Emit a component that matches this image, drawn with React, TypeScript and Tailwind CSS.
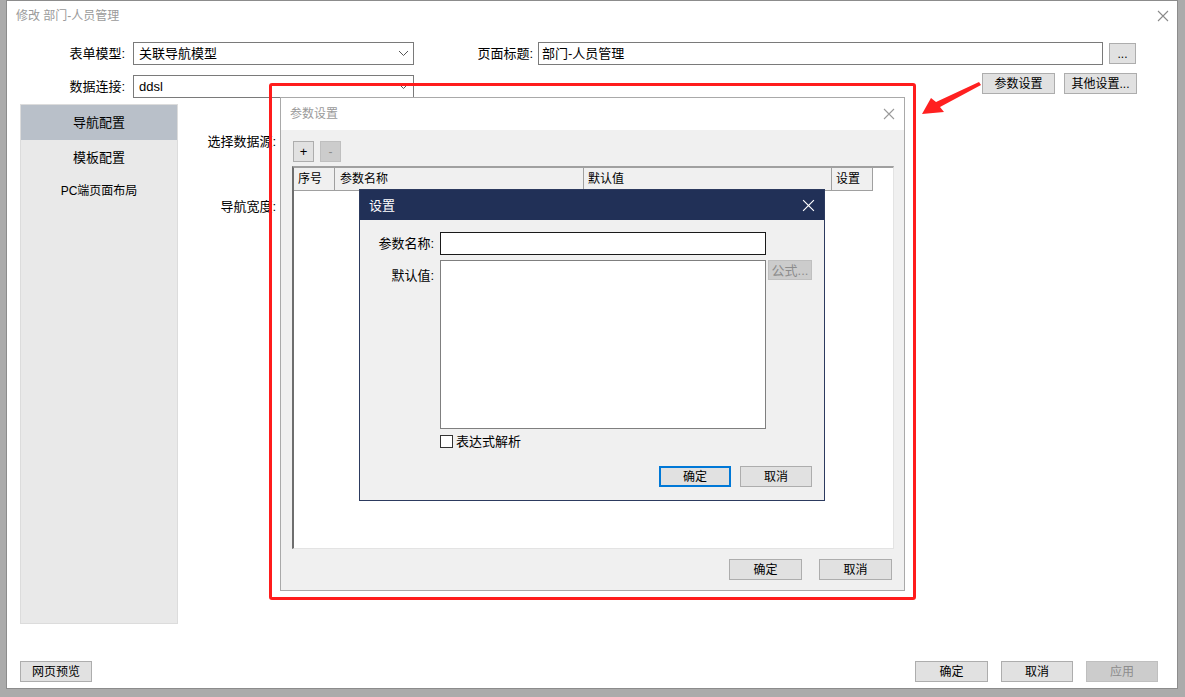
import React from "react";

function Btn({
  children,
  className = "",
  variant = "normal",
}: {
  children: React.ReactNode;
  className?: string;
  variant?: "normal" | "disabled" | "primary";
}) {
  const v =
    variant === "disabled"
      ? "bg-[#cccccc] border border-[#bfbfbf] text-[#8c8c8c]"
      : variant === "primary"
      ? "bg-[#e1e1e1] border-2 border-[#0078d7] text-black"
      : "bg-[#e1e1e1] border border-[#adadad] text-black";
  return (
    <div className={`flex items-center justify-center text-[12px] leading-none ${v} ${className}`}>
      {children}
    </div>
  );
}

function Chevron() {
  return (
    <svg width="11" height="7" viewBox="0 0 11 7" className="shrink-0">
      <path d="M1 1 L5.5 5.5 L10 1" fill="none" stroke="#555" strokeWidth="1" />
    </svg>
  );
}

function XIcon({ color, size = 12 }: { color: string; size?: number }) {
  return (
    <svg width={size} height={size} viewBox="0 0 12 12">
      <path d="M1 1 L11 11 M11 1 L1 11" stroke={color} strokeWidth="1.1" fill="none" />
    </svg>
  );
}

function Select({ value }: { value: string }) {
  return (
    <div className="flex items-center justify-between w-[281px] h-[23px] border border-[#7a7a7a] bg-white pl-[5px] pr-[4px]">
      <span className="text-[13px] text-black leading-none">{value}</span>
      <Chevron />
    </div>
  );
}

export default function App() {
  return (
    <div className="relative w-[1185px] h-[697px] bg-[#ababab] pl-[6px] pr-[7px] pb-[8px] overflow-hidden font-['Liberation_Sans','Noto_Sans_CJK_SC',sans-serif]">
      {/* Outer window */}
      <div className="w-full h-full bg-white border border-[#8c8c8c] flex flex-col">
        {/* title bar */}
        <div className="h-[30px] flex items-center justify-between pl-[9px] pr-[8px]">
          <span className="text-[12px] text-[#9a9a9a] leading-none">修改 部门-人员管理</span>
          <XIcon color="#8a8a8a" />
        </div>
        {/* row 1 */}
        <div className="mt-[11px] h-[23px] flex items-center">
          <div className="w-[120px] text-right text-[13px] text-black leading-none pr-[2px]">表单模型:</div>
          <div className="ml-[6px]">
            <Select value="关联导航模型" />
          </div>
          <div className="w-[124px] text-right text-[13px] text-black leading-none pr-[5px]">页面标题:</div>
          <div className="w-[565px] h-[23px] border border-[#7a7a7a] bg-white flex items-center pl-[3px]">
            <span className="text-[13px] text-black leading-none">部门-人员管理</span>
          </div>
          <Btn className="ml-[6px] w-[27px] h-[21px]">...</Btn>
        </div>
        {/* row 2 */}
        <div className="mt-[10px] h-[23px] flex items-center">
          <div className="w-[120px] text-right text-[13px] text-black leading-none pr-[2px]">数据连接:</div>
          <div className="ml-[6px]">
            <Select value="ddsl" />
          </div>
          <div className="flex-1" />
          <div className="flex self-start -mt-[2px] gap-[9px] mr-[40px]">
            <Btn className="w-[73px] h-[21px]">参数设置</Btn>
            <Btn className="w-[73px] h-[21px]">其他设置...</Btn>
          </div>
        </div>
        {/* main */}
        <div className="mt-[6px] h-[520px] flex pl-[13px]">
          <div className="w-[158px] h-full bg-[#e9e9e9] border border-[#dcdcdc] flex flex-col">
            <div className="h-[35px] bg-[#b9c0c9] flex items-center justify-center text-[13px] text-black leading-none">
              导航配置
            </div>
            <div className="h-[34px] flex items-center justify-center text-[13px] text-black leading-none">
              模板配置
            </div>
            <div className="h-[34px] flex items-center justify-center text-[12px] text-black leading-none">
              PC端页面布局
            </div>
          </div>
          <div className="w-[98px] flex flex-col items-end">
            <div className="mt-[31px] text-[13px] text-black leading-none">选择数据源:</div>
            <div className="mt-[52px] text-[13px] text-black leading-none">导航宽度:</div>
          </div>
        </div>
        {/* footer */}
        <div className="mt-[37px] h-[21px] flex items-center pl-[13px] pr-[19px]">
          <Btn className="w-[72px] h-[21px]">网页预览</Btn>
          <div className="flex-1" />
          <div className="flex gap-[13px]">
            <Btn className="w-[73px] h-[21px]">确定</Btn>
            <Btn className="w-[72px] h-[21px]">取消</Btn>
            <Btn className="w-[72px] h-[21px]" variant="disabled">应用</Btn>
          </div>
        </div>
      </div>

      {/* 参数设置 dialog */}
      <div className="absolute left-[280px] top-[97px] w-[625px] h-[494px] border border-[#a9a9a9] bg-[#f0f0f0] flex flex-col">
        <div className="h-[32px] bg-white flex items-center justify-between pl-[9px] pr-[9px]">
          <span className="text-[12px] text-[#9a9a9a] leading-none">参数设置</span>
          <XIcon color="#9a9a9a" />
        </div>
        <div className="mt-[11px] flex gap-[6px] pl-[12px]">
          <Btn className="w-[21px] h-[21px] text-[13px]">+</Btn>
          <Btn className="w-[21px] h-[21px]" variant="disabled">-</Btn>
        </div>
        <div className="mt-[4px] ml-[11px] w-[602px] h-[383px] bg-white border-t-2 border-l-2 border-t-[#a0a0a0] border-l-[#6e6e6e] border-r border-b border-r-[#e3e3e3] border-b-[#e3e3e3]">
          <div className="flex h-[23px]">
            <div className="w-[41px] h-full bg-[#f0f0f0] border-r border-b border-[#a0a0a0] flex items-center pl-[4px] text-[12px] text-black leading-none">序号</div>
            <div className="w-[249px] h-full bg-[#f0f0f0] border-r border-b border-[#a0a0a0] flex items-center pl-[5px] text-[12px] text-black leading-none">参数名称</div>
            <div className="w-[248px] h-full bg-[#f0f0f0] border-r border-b border-[#a0a0a0] flex items-center pl-[4px] text-[12px] text-black leading-none">默认值</div>
            <div className="w-[41px] h-full bg-[#f0f0f0] border-r border-b border-[#a0a0a0] flex items-center pl-[4px] text-[12px] text-black leading-none">设置</div>
          </div>
        </div>
        <div className="mt-[10px] flex justify-end gap-[17px] pr-[12px]">
          <Btn className="w-[73px] h-[21px]">确定</Btn>
          <Btn className="w-[73px] h-[21px]">取消</Btn>
        </div>
      </div>

      {/* 设置 dialog */}
      <div className="absolute left-[359px] top-[189px] w-[466px] h-[312px] border border-[#2c3a5f] bg-[#f0f0f0] flex flex-col">
        <div className="h-[30px] bg-[#213057] flex items-center justify-between pl-[9px] pr-[9px]">
          <span className="text-[13px] text-white leading-none">设置</span>
          <XIcon color="#ffffff" size={13} />
        </div>
        <div className="mt-[12px] flex items-center">
          <div className="w-[74px] text-right text-[13px] text-black leading-none">参数名称:</div>
          <div className="ml-[6px] w-[326px] h-[23px] bg-white border border-[#1a1a1a]" />
        </div>
        <div className="mt-[5px] flex items-start">
          <div className="w-[74px] text-right text-[13px] text-black leading-none mt-[9px]">默认值:</div>
          <div className="ml-[6px] w-[326px] h-[169px] bg-white border border-[#7f7f7f]" />
          <Btn className="ml-[2px] w-[44px] h-[20px] text-[13px]" variant="disabled">公式...</Btn>
        </div>
        <div className="mt-[6px] ml-[80px] flex items-center gap-[3px]">
          <div className="w-[13px] h-[13px] bg-white border border-[#333]" />
          <span className="text-[13px] text-black leading-none">表达式解析</span>
        </div>
        <div className="mt-[18px] flex justify-end gap-[9px] pr-[12px]">
          <Btn className="w-[72px] h-[21px]" variant="primary">确定</Btn>
          <Btn className="w-[72px] h-[21px]">取消</Btn>
        </div>
      </div>

      {/* red highlight rectangle */}
      <div className="absolute left-[269px] top-[83px] w-[647px] h-[517px] border-[3px] border-[#ff1c1c] rounded-[3px] pointer-events-none" />

      {/* red arrow */}
      <svg className="absolute left-0 top-0 pointer-events-none" width="1185" height="697">
        <polygon
          points="922,114 931,98 936,102 979,82 981,85 940,107 944,112"
          fill="#ff2020"
        />
      </svg>
    </div>
  );
}
